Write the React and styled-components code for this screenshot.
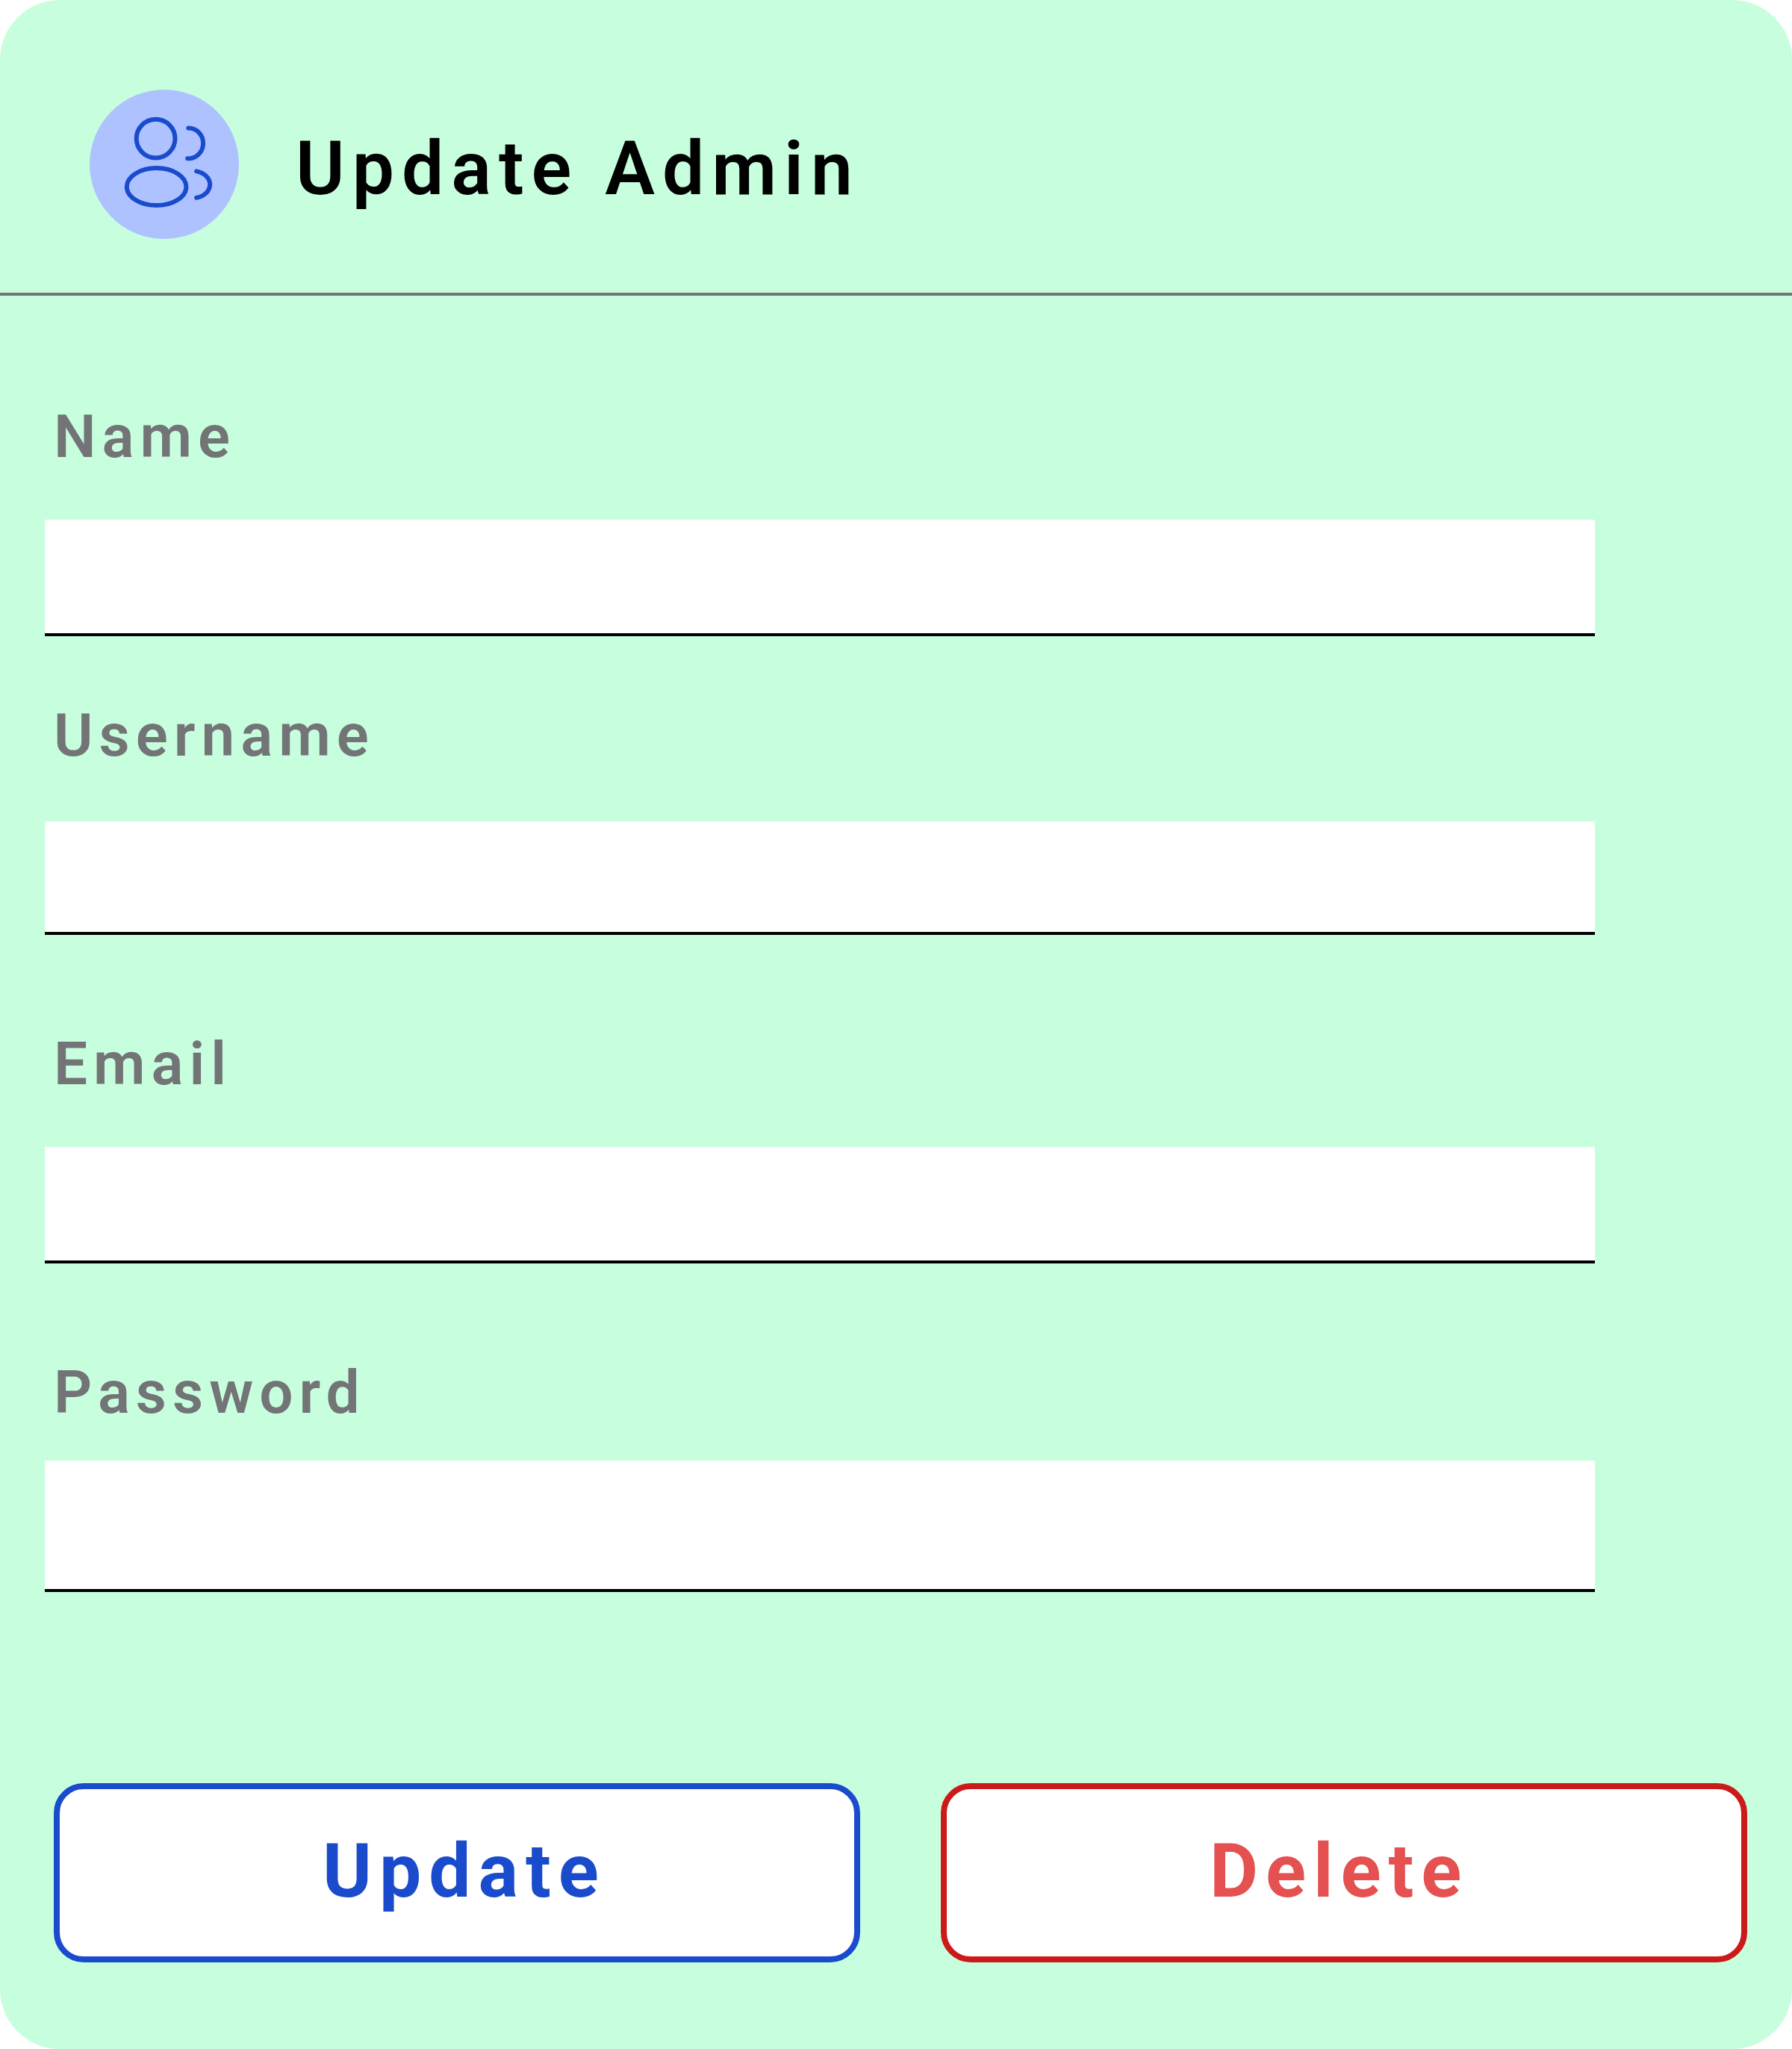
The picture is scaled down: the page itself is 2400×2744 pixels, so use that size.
import React from "react";
import styled, { createGlobalStyle } from "styled-components";

const GlobalStyle = createGlobalStyle`
  * { box-sizing: border-box; }
  body { margin: 0; background: #ffffff; font-family: Roboto, sans-serif; }
`;

const Card = styled.form`
  width: 2400px;
  height: 2744px;
  display: flex;
  flex-direction: column;
  background: #c7ffde;
  border-radius: 80px;
`;

const Header = styled.header`
  height: 396px;
  display: flex;
  align-items: flex-start;
  gap: 76px;
  padding: 120px 120px 0;
  border-bottom: 4px solid #737476;
`;

const Avatar = styled.div`
  width: 200px;
  height: 200px;
  border-radius: 50%;
  background: #adc2ff;

  svg {
    display: block;
  }
`;

const Title = styled.h1`
  margin: 46px 0 0;
  font-size: 100px;
  line-height: 120px;
  font-weight: 600;
  letter-spacing: 10px;
  color: #000000;
`;

const Field = styled.div`
  display: flex;
  flex-direction: column;
  gap: ${(p) => p.$gap}px;
  margin: ${(p) => p.$space}px 0 0 60px;
`;

const Label = styled.label`
  padding-left: 12px;
  font-size: 80px;
  line-height: 96px;
  font-weight: 600;
  letter-spacing: 8px;
  color: #737476;
`;

const Input = styled.input`
  display: block;
  width: 2076px;
  height: ${(p) => p.$height}px;
  padding: 0 24px;
  border: 0;
  border-bottom: 4px solid #000000;
  border-radius: 0;
  outline: none;
  background: #ffffff;
  font: 500 80px Roboto, sans-serif;
`;

const Actions = styled.div`
  display: flex;
  gap: 108px;
  margin: 256px 0 0 72px;
`;

const Button = styled.button`
  width: 1080px;
  height: 240px;
  display: flex;
  align-items: flex-start;
  padding: 50px 0 0 ${(p) => p.$inset}px;
  border: 8px solid ${(p) => p.$border};
  border-radius: 40px;
  background: #ffffff;
  color: ${(p) => p.$color};
  font: 700 100px/120px Roboto, sans-serif;
  letter-spacing: 10px;
`;

const fields = [
  { id: "name", label: "Name", type: "text", space: 141, gap: 63, height: 156 },
  { id: "username", label: "Username", type: "text", space: 85, gap: 67, height: 152 },
  { id: "email", label: "Email", type: "email", space: 125, gap: 63, height: 156 },
  { id: "password", label: "Password", type: "password", space: 125, gap: 43, height: 176 },
];

function UsersIcon() {
  return (
    <svg width="200" height="200" viewBox="0 0 200 200" fill="none" stroke="#1a4bcd" strokeWidth="6" strokeLinecap="round">
      <circle cx="88.6" cy="65.6" r="25.9" />
      <ellipse cx="89.6" cy="130.1" rx="39.8" ry="25" />
      <path d="M132.3 51.4C143.2 51.4 152.1 60.6 152.1 71.9C152.1 83.1 143.2 92.3 132.3 92.3H131.2" />
      <path d="M143.1 109.4C153.2 111.2 161.2 118.3 161.2 127.1C161.2 135.9 153.2 143 143.1 144.8" />
    </svg>
  );
}

export default function App() {
  return (
    <>
      <GlobalStyle />
      <Card>
        <Header>
          <Avatar>
            <UsersIcon />
          </Avatar>
          <Title>Update Admin</Title>
        </Header>
        {fields.map((f) => (
          <Field key={f.id} $space={f.space} $gap={f.gap}>
            <Label htmlFor={f.id}>{f.label}</Label>
            <Input id={f.id} type={f.type} $height={f.height} />
          </Field>
        ))}
        <Actions>
          <Button type="button" $inset={352} $border="#1a4bcd" $color="#1a4bcd">Update</Button>
          <Button type="button" $inset={352} $border="#cc1a1a" $color="#e55050">Delete</Button>
        </Actions>
      </Card>
    </>
  );
}
